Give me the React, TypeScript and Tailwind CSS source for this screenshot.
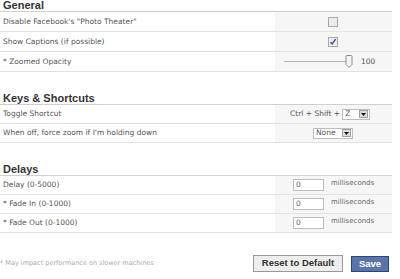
import type { ReactNode } from "react";

const font = { fontFamily: "'DejaVu Sans', sans-serif" };
const sansBold = "font-['Liberation_Sans',Arial,sans-serif] font-bold";

function Heading({ children, first }: { children: ReactNode; first?: boolean }) {
  return (
    <div
      className={`h-[12px] border-b border-[#cfcfcf] pl-[3px] text-[11px] leading-[11px] text-[#333] ${sansBold} ${
        first ? "" : "mt-[21px]"
      }`}
    >
      {children}
    </div>
  );
}

function Row({ label, children, tall }: { label: string; children: ReactNode; tall?: boolean }) {
  return (
    <div className={`flex border-b border-[#e2e2e2] ${tall ? "h-[20px]" : "h-[19px]"}`}>
      <div className="flex flex-1 items-center pl-[3px] text-[7.5px] text-[#555]">{label}</div>
      <div className="flex w-[117px] items-center bg-[#f6f6f6]">{children}</div>
    </div>
  );
}

function Checkbox({ checked }: { checked?: boolean }) {
  return (
    <span className="ml-[53px] flex h-[10px] w-[10px] items-center justify-center border border-[#a8a8a8] bg-[#ececec]">
      {checked && (
        <svg width="8" height="8" viewBox="0 0 8 8">
          <path d="M1.5 4.2 L3.2 6 L6.6 1.2" fill="none" stroke="#3b4f86" strokeWidth="1.4" />
        </svg>
      )}
    </span>
  );
}

function Select({ value, width }: { value: string; width: string }) {
  return (
    <span className={`flex h-[11px] items-center border border-[#bdbdbd] bg-white ${width}`}>
      <span className="flex-1 pl-[2px] text-[7.5px] leading-none text-[#555]">{value}</span>
      <span className="mr-[1px] flex h-[8px] w-[9px] items-center justify-center border border-[#a0a0a0] bg-[#dcdcdc]">
        <svg width="5" height="3" viewBox="0 0 5 3">
          <path d="M0 0 H5 L2.5 3 Z" fill="#111" />
        </svg>
      </span>
    </span>
  );
}

function MsInput() {
  return (
    <>
      <span className="ml-[18px] flex h-[12px] w-[31px] items-center border border-[#bdbdbd] bg-white pl-[2px] text-[7.5px] text-[#666]">
        0
      </span>
      <span className="ml-[7px] -mt-[4px] text-[7px] text-[#666]">milliseconds</span>
    </>
  );
}

export default function App() {
  return (
    <div className="h-[279px] w-[400px] bg-white" style={font}>
      <div className="w-[392px]">
        <Heading first>General</Heading>
        <Row label={'Disable Facebook\'s "Photo Theater"'} tall>
          <Checkbox />
        </Row>
        <Row label="Show Captions (if possible)" tall>
          <Checkbox checked />
        </Row>
        <Row label="* Zoomed Opacity" tall>
          <span className="ml-[9px] h-[1px] w-[62px] bg-[#b5b5b5]" />
          <svg width="8" height="13" viewBox="0 0 8 13" className="-ml-[1px]">
            <path
              d="M1 1.5 Q1 0.5 2 0.5 H6 Q7 0.5 7 1.5 V9.5 L4 12.5 L1 9.5 Z"
              fill="#f4f4f4"
              stroke="#8a8a8a"
            />
          </svg>
          <span className="ml-[8px] text-[7.5px] text-[#555]">100</span>
        </Row>

        <Heading>Keys &amp; Shortcuts</Heading>
        <Row label="Toggle Shortcut">
          <span className="ml-[15px] mr-[2px] text-[7.5px] text-[#555]">Ctrl + Shift +</span>
          <Select value="Z" width="w-[28px]" />
        </Row>
        <Row label="When off, force zoom if I'm holding down">
          <span className="ml-[38px]" />
          <Select value="None" width="w-[40px]" />
        </Row>

        <Heading>Delays</Heading>
        <Row label="Delay (0-5000)">
          <MsInput />
        </Row>
        <Row label="* Fade In (0-1000)">
          <MsInput />
        </Row>
        <Row label="* Fade Out (0-1000)">
          <MsInput />
        </Row>

        <div className="mt-[22px] flex items-center">
          <span className="flex-1 text-[6.5px] text-[#aaa]">* May impact performance on slower machines</span>
          <button className={`h-[17px] w-[90px] border border-[#999] bg-[#eeeeee] text-[9.5px] text-[#333] ${sansBold}`}>
            Reset to Default
          </button>
          <button
            className={`ml-[8px] mr-[3px] h-[16px] w-[38px] border border-[#29447e] bg-[#5b74a8] text-[9.5px] text-white ${sansBold}`}
          >
            Save
          </button>
        </div>
      </div>
    </div>
  );
}
